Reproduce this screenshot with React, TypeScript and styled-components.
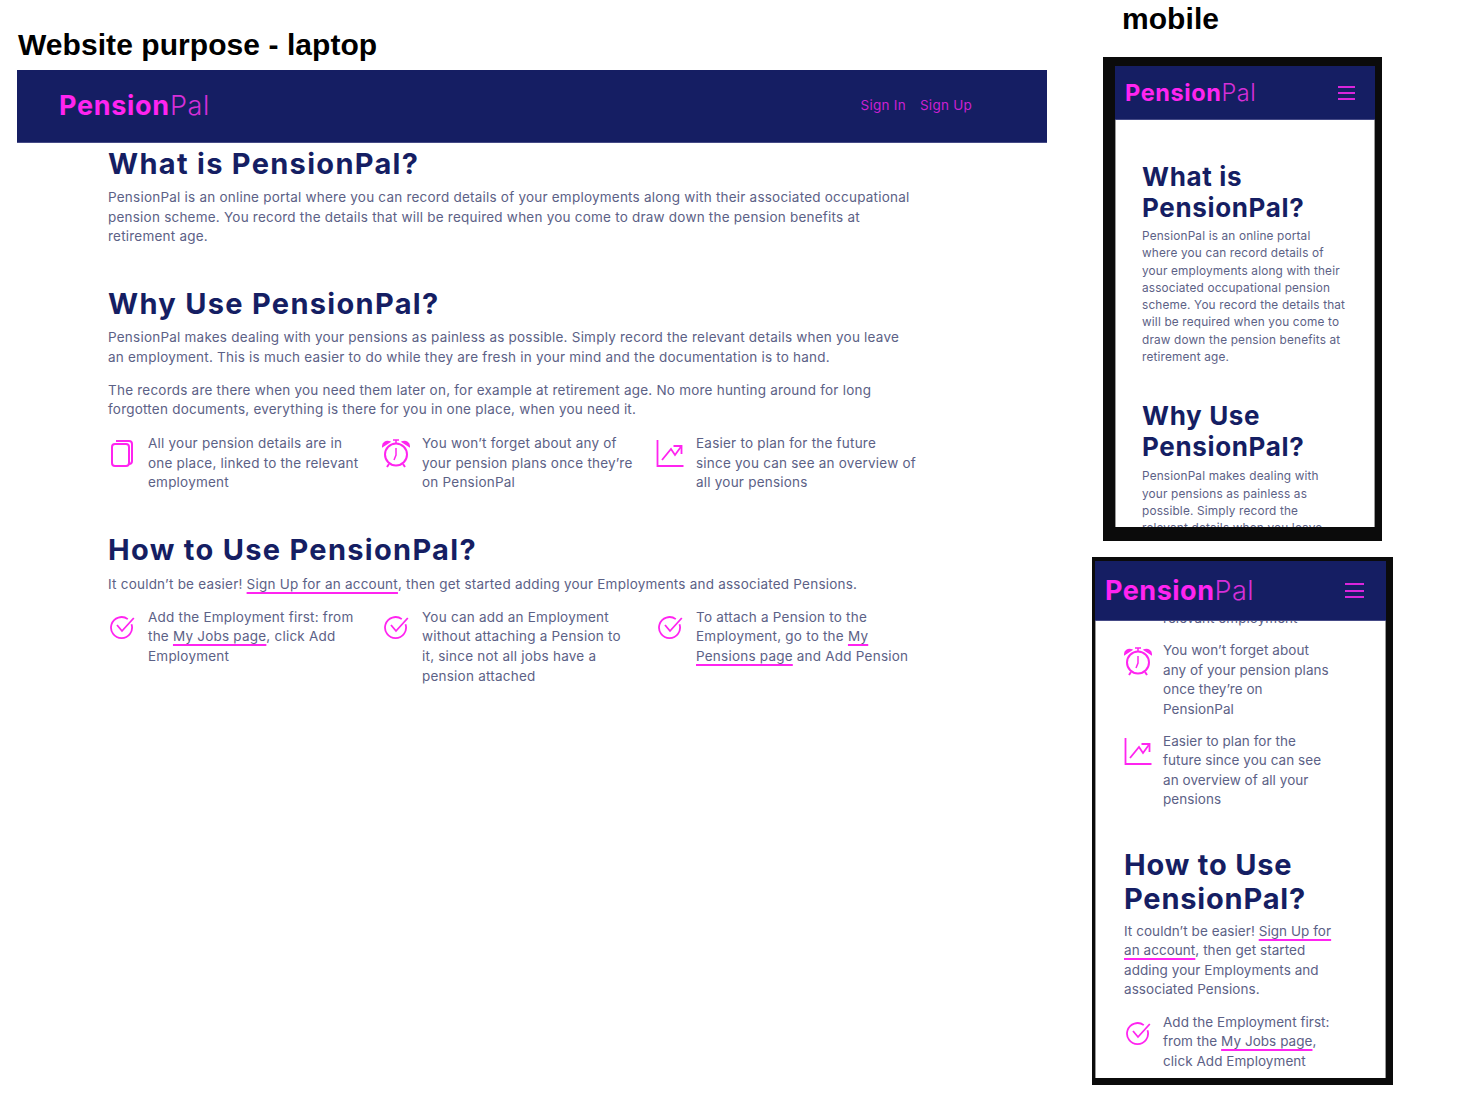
import React from 'react';
import styled, { createGlobalStyle } from 'styled-components';

type Variant = 'laptop' | 'small' | 'large';

const navy = '#151e63';
const pink = '#ff24f0';
const bodyFont = 'Inter, "Noto Sans", sans-serif';

const copySizes = {
  laptop: { size: 13.5, line: 19.7, spacing: 0.22 },
  small: { size: 11.8, line: 17.3, spacing: 0.17 },
  large: { size: 13.5, line: 19.5, spacing: 0.05 },
};

const headingSizes = {
  laptop: { size: 29, line: 36, spacing: 1.3 },
  small: { size: 26, line: 31, spacing: 0.65 },
  large: { size: 29, line: 34, spacing: 0.8 },
};

const logoSizes = {
  laptop: { size: 27, spacing: 0.7 },
  small: { size: 23.5, spacing: 0.6 },
  large: { size: 27, spacing: 0.5 },
};

const GlobalStyle = createGlobalStyle`
  html, body {
    margin: 0;
    padding: 0;
    background: #fff;
  }
`;

const Page = styled.div`
  width: 1476px;
  height: 1110px;
  display: flex;
  align-items: flex-start;
  overflow: hidden;
  background: #fff;
`;

const LaptopColumn = styled.div`
  width: 1030px;
  margin-left: 17px;
  padding-top: 27px;
`;

const MobileColumn = styled.div`
  width: 310px;
  margin-left: 45px;
  padding-top: 1px;
`;

const SlideTitle = styled.div<{ $indent: number; $gap: number }>`
  font-family: "Liberation Sans", Arial, sans-serif;
  font-weight: 700;
  font-size: 30px;
  line-height: 36px;
  letter-spacing: 0.06px;
  color: #000;
  margin-left: ${p => p.$indent}px;
  margin-bottom: ${p => p.$gap}px;
`;

const Navbar = styled.header<{ $height: number; $pad: number; $right: number; $lift?: number }>`
  height: ${p => p.$height}px;
  box-sizing: border-box;
  flex-shrink: 0;
  display: flex;
  align-items: center;
  justify-content: space-between;
  padding: 0 ${p => p.$right}px ${p => p.$lift ?? 0}px ${p => p.$pad}px;
  background: ${navy};
  border-bottom: 1px solid #454a86;
`;

const Logo = styled.div<{ $variant: Variant }>`
  font-family: ${bodyFont};
  font-size: ${p => logoSizes[p.$variant].size}px;
  letter-spacing: ${p => logoSizes[p.$variant].spacing}px;
  color: ${pink};
  font-weight: 700;

  span {
    font-weight: 300;
    color: #d52fd8;
  }
`;

const NavLinks = styled.nav`
  display: flex;
  gap: 14px;
`;

const NavLink = styled.a`
  font-family: ${bodyFont};
  font-size: 13.5px;
  letter-spacing: 0.25px;
  color: #cc20d2;
`;

const LaptopBody = styled.main`
  padding: 3px 0 0 91px;
`;

const Section = styled.section<{ $gap?: number }>`
  margin-top: ${p => p.$gap ?? 0}px;
`;

const Heading = styled.h2<{ $variant: Variant; $gap: number }>`
  margin: 0 0 ${p => p.$gap}px;
  font-family: ${bodyFont};
  font-weight: 700;
  color: ${navy};
  font-size: ${p => headingSizes[p.$variant].size}px;
  line-height: ${p => headingSizes[p.$variant].line}px;
  letter-spacing: ${p => headingSizes[p.$variant].spacing}px;
`;

const Copy = styled.p<{ $variant: Variant; $gap?: number }>`
  margin: 0 0 ${p => p.$gap ?? 0}px;
  font-family: ${bodyFont};
  font-weight: 400;
  white-space: nowrap;
  color: #5c6186;
  font-size: ${p => copySizes[p.$variant].size}px;
  line-height: ${p => copySizes[p.$variant].line}px;
  letter-spacing: ${p => copySizes[p.$variant].spacing}px;
`;

const TextLink = styled.a`
  color: inherit;
  text-decoration: underline;
  text-decoration-color: ${pink};
  text-decoration-thickness: 1.5px;
  text-underline-offset: 3px;
`;

const FeatureGrid = styled.div`
  display: grid;
  grid-template-columns: repeat(3, 274px);
`;

const FeatureStack = styled.div<{ $gap: number }>`
  display: flex;
  flex-direction: column;
  gap: ${p => p.$gap}px;
`;

const Feature = styled.div<{ $gap: number }>`
  display: flex;
  align-items: flex-start;
  gap: ${p => p.$gap}px;
`;

const IconSlot = styled.div<{ $top: number }>`
  width: 28px;
  flex-shrink: 0;
  display: flex;
  justify-content: center;
  padding-top: ${p => p.$top}px;
  color: ${pink};
`;

const PhoneFrame = styled.div<{ $w: number; $h: number; $indent: number; $top: number; $edges: string }>`
  box-sizing: border-box;
  width: ${p => p.$w}px;
  height: ${p => p.$h}px;
  margin-left: ${p => p.$indent}px;
  margin-top: ${p => p.$top}px;
  border-style: solid;
  border-color: #0b0b0b;
  border-width: ${p => p.$edges};
  background: #fff;
  display: flex;
  flex-direction: column;
`;

const Burger = styled.div<{ $w: number; $gap: number }>`
  width: ${p => p.$w}px;
  display: flex;
  flex-direction: column;
  gap: ${p => p.$gap}px;

  i {
    display: block;
    height: 2px;
    background: #d925dc;
  }
`;

const PhoneBody = styled.div<{ $pad: number; $offset: number }>`
  flex: 1;
  min-height: 0;
  overflow: hidden;
  box-sizing: border-box;
  padding-left: ${p => p.$pad}px;
  border-left: 1px solid #9a9a9a;
  border-right: 1px solid #9a9a9a;

  & > div {
    margin-top: ${p => p.$offset}px;
  }
`;

const CopyIcon = () => (
  <svg width="24" height="28" viewBox="0 0 24 28" fill="none" stroke="currentColor" strokeWidth="2">
    <rect x="2" y="5" width="17" height="22" rx="3" />
    <path d="M6 2h13a3 3 0 0 1 3 3v17a3 3 0 0 1-3 3" />
  </svg>
);

const ClockIcon = () => (
  <svg width="28" height="30" viewBox="0 0 28 30" fill="none" stroke="currentColor" strokeWidth="2">
    <circle cx="14" cy="16.5" r="11" />
    <path d="M14 10v7l-2 5" strokeWidth="1.5" />
    <path d="M7 26l-2 3M21 26l2 3" />
    <path d="M1 8c0-3 3-5 6-4z" fill="currentColor" />
    <path d="M27 8c0-3-3-5-6-4z" fill="currentColor" />
    <path d="M11 2h6M14 2v3" strokeWidth="1.5" />
  </svg>
);

const ChartIcon = () => (
  <svg width="28" height="28" viewBox="0 0 28 28" fill="none" stroke="currentColor" strokeWidth="1.8">
    <path d="M1.5 1v26h26" />
    <path d="M6 21l9-11 4 6 6.500-9" />
    <path d="M17.500 7h8v8" />
  </svg>
);

const CheckIcon = () => (
  <svg width="26" height="26" viewBox="-1 0 26 26" fill="none" stroke="currentColor" strokeWidth="1.8">
    <path d="M21.500 10.200A10.500 10.500 0 1 1 17.800 5.100" />
    <path d="M7 11l5 6L23.800 4" />
  </svg>
);

const lines = (...parts: string[]) =>
  parts.map((part, i) => (
    <React.Fragment key={i}>
      {part}
      {i < parts.length - 1 && <br />}
    </React.Fragment>
  ));

const LaptopView = () => (
  <div>
    <Navbar $height={73} $pad={42} $right={75} $lift={2}>
      <Logo $variant="laptop">Pension<span>Pal</span></Logo>
      <NavLinks>
        <NavLink>Sign In</NavLink>
        <NavLink>Sign Up</NavLink>
      </NavLinks>
    </Navbar>
    <LaptopBody>
      <Section>
        <Heading $variant="laptop" $gap={6}>What is PensionPal?</Heading>
        <Copy $variant="laptop">
          {lines(
            'PensionPal is an online portal where you can record details of your employments along with their associated occupational',
            'pension scheme. You record the details that will be required when you come to draw down the pension benefits at',
            'retirement age.',
          )}
        </Copy>
      </Section>
      <Section $gap={39}>
        <Heading $variant="laptop" $gap={6}>Why Use PensionPal?</Heading>
        <Copy $variant="laptop" $gap={13}>
          {lines(
            'PensionPal makes dealing with your pensions as painless as possible. Simply record the relevant details when you leave',
            'an employment. This is much easier to do while they are fresh in your mind and the documentation is to hand.',
          )}
        </Copy>
        <Copy $variant="laptop" $gap={14}>
          {lines(
            'The records are there when you need them later on, for example at retirement age. No more hunting around for long',
            'forgotten documents, everything is there for you in one place, when you need it.',
          )}
        </Copy>
        <FeatureGrid>
          <Feature $gap={12}>
            <IconSlot $top={5}><CopyIcon /></IconSlot>
            <Copy $variant="laptop">{lines('All your pension details are in', 'one place, linked to the relevant', 'employment')}</Copy>
          </Feature>
          <Feature $gap={12}>
            <IconSlot $top={4}><ClockIcon /></IconSlot>
            <Copy $variant="laptop">{lines('You won’t forget about any of', 'your pension plans once they’re', 'on PensionPal')}</Copy>
          </Feature>
          <Feature $gap={12}>
            <IconSlot $top={5}><ChartIcon /></IconSlot>
            <Copy $variant="laptop">{lines('Easier to plan for the future', 'since you can see an overview of', 'all your pensions')}</Copy>
          </Feature>
        </FeatureGrid>
      </Section>
      <Section $gap={39}>
        <Heading $variant="laptop" $gap={7}>How to Use PensionPal?</Heading>
        <Copy $variant="laptop" $gap={13}>
          It couldn’t be easier! <TextLink>Sign Up for an account</TextLink>, then get started adding your Employments and associated Pensions.
        </Copy>
        <FeatureGrid>
          <Feature $gap={12}>
            <IconSlot $top={6}><CheckIcon /></IconSlot>
            <Copy $variant="laptop">
              Add the Employment first: from<br />
              the <TextLink>My Jobs page</TextLink>, click Add<br />
              Employment
            </Copy>
          </Feature>
          <Feature $gap={12}>
            <IconSlot $top={6}><CheckIcon /></IconSlot>
            <Copy $variant="laptop">
              {lines('You can add an Employment', 'without attaching a Pension to', 'it, since not all jobs have a', 'pension attached')}
            </Copy>
          </Feature>
          <Feature $gap={12}>
            <IconSlot $top={6}><CheckIcon /></IconSlot>
            <Copy $variant="laptop">
              To attach a Pension to the<br />
              Employment, go to the <TextLink>My</TextLink><br />
              <TextLink>Pensions page</TextLink> and Add Pension
            </Copy>
          </Feature>
        </FeatureGrid>
      </Section>
    </LaptopBody>
  </div>
);

const PhoneTop = () => (
  <PhoneFrame $w={279} $h={484} $indent={11} $top={0} $edges="9px 7px 14px 12px">
    <Navbar $height={54} $pad={10} $right={20}>
      <Logo $variant="small">Pension<span>Pal</span></Logo>
      <Burger $w={17} $gap={4}><i /><i /><i /></Burger>
    </Navbar>
    <PhoneBody $pad={26} $offset={41}>
      <div>
        <Section>
          <Heading $variant="small" $gap={5}>What is<br />PensionPal?</Heading>
          <Copy $variant="small">
            {lines(
              'PensionPal is an online portal',
              'where you can record details of',
              'your employments along with their',
              'associated occupational pension',
              'scheme. You record the details that',
              'will be required when you come to',
              'draw down the pension benefits at',
              'retirement age.',
            )}
          </Copy>
        </Section>
        <Section $gap={34}>
          <Heading $variant="small" $gap={6}>Why Use<br />PensionPal?</Heading>
          <Copy $variant="small">
            {lines(
              'PensionPal makes dealing with',
              'your pensions as painless as',
              'possible. Simply record the',
              'relevant details when you leave',
            )}
          </Copy>
        </Section>
      </div>
    </PhoneBody>
  </PhoneFrame>
);

const PhoneBottom = () => (
  <PhoneFrame $w={301} $h={528} $indent={0} $top={16} $edges="4px 7px 7px 3px">
    <Navbar $height={60} $pad={10} $right={22}>
      <Logo $variant="large">Pension<span>Pal</span></Logo>
      <Burger $w={19} $gap={4.5}><i /><i /><i /></Burger>
    </Navbar>
    <PhoneBody $pad={28} $offset={-12}>
      <div>
        <FeatureStack $gap={12.5}>
          <Feature $gap={11}>
            <IconSlot $top={0} />
            <Copy $variant="large">relevant employment</Copy>
          </Feature>
          <Feature $gap={11}>
            <IconSlot $top={5}><ClockIcon /></IconSlot>
            <Copy $variant="large">{lines('You won’t forget about', 'any of your pension plans', 'once they’re on', 'PensionPal')}</Copy>
          </Feature>
          <Feature $gap={11}>
            <IconSlot $top={5}><ChartIcon /></IconSlot>
            <Copy $variant="large">{lines('Easier to plan for the', 'future since you can see', 'an overview of all your', 'pensions')}</Copy>
          </Feature>
        </FeatureStack>
        <Section $gap={38}>
          <Heading $variant="large" $gap={6}>How to Use<br />PensionPal?</Heading>
          <Copy $variant="large" $gap={13}>
            It couldn’t be easier! <TextLink>Sign Up for</TextLink><br />
            <TextLink>an account</TextLink>, then get started<br />
            adding your Employments and<br />
            associated Pensions.
          </Copy>
          <Feature $gap={11}>
            <IconSlot $top={7}><CheckIcon /></IconSlot>
            <Copy $variant="large">
              Add the Employment first:<br />
              from the <TextLink>My Jobs page</TextLink>,<br />
              click Add Employment
            </Copy>
          </Feature>
        </Section>
      </div>
    </PhoneBody>
  </PhoneFrame>
);

export default function App() {
  return (
    <Page>
      <GlobalStyle />
      <LaptopColumn>
        <SlideTitle $indent={1} $gap={7}>Website purpose - laptop</SlideTitle>
        <LaptopView />
      </LaptopColumn>
      <MobileColumn>
        <SlideTitle $indent={30} $gap={20}>mobile</SlideTitle>
        <PhoneTop />
        <PhoneBottom />
      </MobileColumn>
    </Page>
  );
}
